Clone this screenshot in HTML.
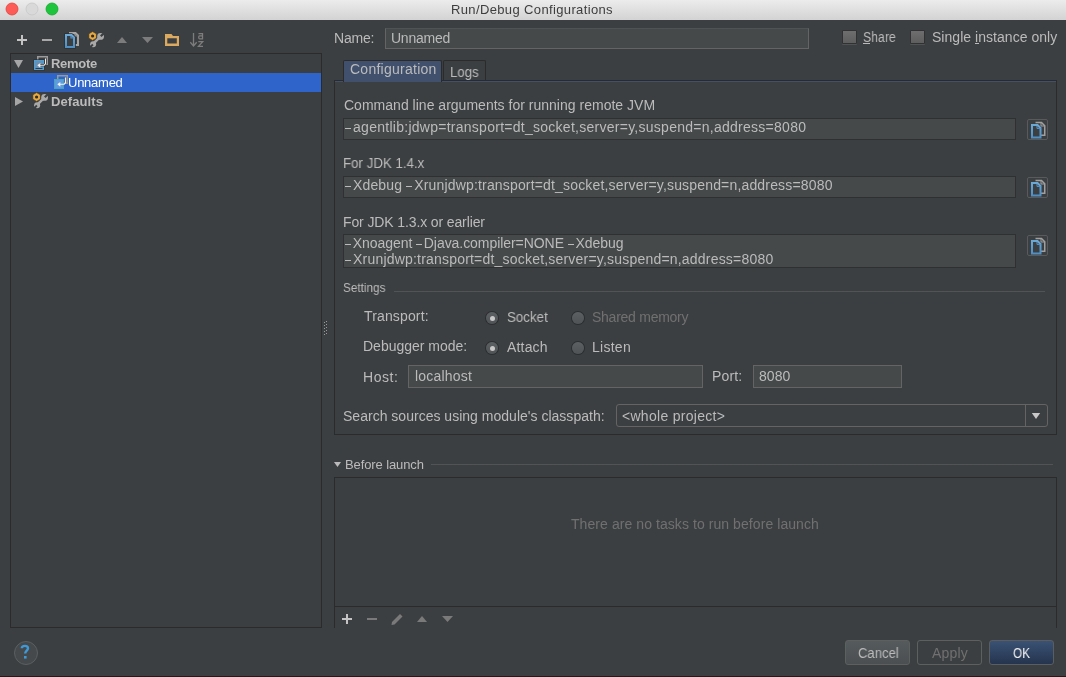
<!DOCTYPE html>
<html><head><meta charset="utf-8">
<style>
*{box-sizing:border-box;margin:0;padding:0}
html,body{width:1066px;height:677px;overflow:hidden;background:#3c3f41}
body{position:relative;font-family:"Liberation Sans",sans-serif;font-size:14px;color:#bbbbbb}
.l{position:absolute;white-space:pre;line-height:1;-webkit-font-smoothing:antialiased;will-change:transform}
.b{position:absolute}
svg{position:absolute;left:0;top:0}
.d{position:relative;color:transparent}
.d::after{content:"";position:absolute;left:0;width:6px;top:9px;height:1px;background:#bbbbbb}
</style></head><body>
<!-- title bar -->
<div class="b" style="left:0;top:0;width:1066px;height:20px;background:linear-gradient(#ececec,#d3d3d3)"></div>

<!-- tree panel -->
<div class="b" style="left:10px;top:53px;width:312px;height:575px;border:1px solid #2b2b2b"></div>
<div class="b" style="left:11px;top:73px;width:310px;height:19px;background:#2f65ca"></div>

<!-- name field -->
<div class="b" style="left:385px;top:28px;width:424px;height:21px;background:#45494a;border:1px solid #646464;border-top-color:#505355"></div>

<!-- checkboxes -->
<div class="b" style="left:842px;top:30px;width:15px;height:14px;border-radius:1px;border:1px solid #303132;background:linear-gradient(#6e6e6e,#5e5e5e);box-shadow:0 1px 0 #505254"></div>
<div class="b" style="left:910px;top:30px;width:15px;height:14px;border-radius:1px;border:1px solid #303132;background:linear-gradient(#6e6e6e,#5e5e5e);box-shadow:0 1px 0 #505254"></div>

<!-- config panel -->
<div class="b" style="left:334px;top:80px;width:723px;height:355px;border:1px solid #2b2b2b"></div>
<div class="b" style="left:335px;top:81px;width:721px;height:1px;background:#41516d"></div>
<div class="b" style="left:343px;top:60px;width:99px;height:22px;background:#41516d;border:1px solid #2b2b2b;border-bottom:none;border-radius:2px 2px 0 0"></div>
<div class="b" style="left:443px;top:60px;width:43px;height:21px;border:1px solid #2b2b2b;border-bottom:none;border-radius:2px 2px 0 0"></div>

<div class="b" style="left:343px;top:118px;width:673px;height:22px;background:#45494a;border:1px solid #2e3032"></div>
<div class="b" style="left:343px;top:176px;width:673px;height:22px;background:#45494a;border:1px solid #2e3032"></div>
<div class="b" style="left:343px;top:234px;width:673px;height:34px;background:#45494a;border:1px solid #2e3032"></div>

<div class="b" style="left:1027px;top:119px;width:21px;height:21px;border:1px solid #585a5c;border-radius:2px"></div>
<div class="b" style="left:1027px;top:177px;width:21px;height:21px;border:1px solid #585a5c;border-radius:2px"></div>
<div class="b" style="left:1027px;top:235px;width:21px;height:21px;border:1px solid #585a5c;border-radius:2px"></div>

<div class="b" style="left:394px;top:291px;width:651px;height:1px;background:#515355"></div>

<!-- radios -->
<div class="b" style="left:486px;top:312px;width:12px;height:12px;border-radius:50%;background:linear-gradient(#5d6062,#505355);box-shadow:0 0 0 1px #2b2d2f"></div>
<div class="b" style="left:486px;top:342px;width:12px;height:12px;border-radius:50%;background:linear-gradient(#5d6062,#505355);box-shadow:0 0 0 1px #2b2d2f"></div>
<div class="b" style="left:572px;top:312px;width:12px;height:12px;border-radius:50%;background:linear-gradient(#5d6062,#505355);box-shadow:0 0 0 1px #2b2d2f"></div>
<div class="b" style="left:572px;top:342px;width:12px;height:12px;border-radius:50%;background:linear-gradient(#5d6062,#505355);box-shadow:0 0 0 1px #2b2d2f"></div>
<div class="b" style="left:489.5px;top:315.5px;width:5px;height:5px;border-radius:50%;background:#c8c8c8"></div>
<div class="b" style="left:489.5px;top:345.5px;width:5px;height:5px;border-radius:50%;background:#c8c8c8"></div>

<div class="b" style="left:408px;top:365px;width:295px;height:23px;background:#45494a;border:1px solid #646464"></div>
<div class="b" style="left:753px;top:365px;width:149px;height:23px;background:#45494a;border:1px solid #646464"></div>

<div class="b" style="left:616px;top:404px;width:432px;height:23px;border:1px solid #646464;border-radius:3px"></div>
<div class="b" style="left:1025px;top:405px;width:1px;height:21px;background:#646464"></div>

<!-- before launch -->
<div class="b" style="left:431px;top:464px;width:622px;height:1px;background:#515355"></div>
<div class="b" style="left:334px;top:477px;width:723px;height:151px;border:1px solid #2b2b2b;border-bottom:none"></div>
<div class="b" style="left:335px;top:606px;width:721px;height:1px;background:#2b2b2b"></div>

<!-- buttons -->
<div class="b" style="left:845px;top:640px;width:65px;height:25px;border:1px solid #5e6060;border-radius:3px;background:linear-gradient(#555a5c,#4b4f51)"></div>
<div class="b" style="left:917px;top:640px;width:65px;height:25px;border:1px solid #5e6060;border-radius:3px"></div>
<div class="b" style="left:989px;top:640px;width:65px;height:25px;border:1px solid #5b5e60;border-radius:3px;background:linear-gradient(#3a5274,#25344e)"></div>

<div class="b" style="left:863px;top:43px;width:7px;height:1px;background:#bbb"></div>
<div class="b" style="left:975px;top:43px;width:4px;height:1px;background:#bbb"></div>
<!-- help -->
<div class="b" style="left:14px;top:641px;width:24px;height:24px;border-radius:50%;background:#45494b;border:1px solid #5c5f61"></div>

<div class="b" style="left:0;top:676px;width:1066px;height:1px;background:#1c1c1c"></div>

<svg width="1066" height="677" viewBox="0 0 1066 677">
 <defs><linearGradient id="bg1" x1="0" y1="0" x2="0" y2="1"><stop offset="0" stop-color="#6aa8d8"/><stop offset="1" stop-color="#4f8fc4"/></linearGradient>
 <linearGradient id="bg2" x1="0" y1="0" x2="0" y2="1"><stop offset="0" stop-color="#6aa8d8"/><stop offset="1" stop-color="#4f8fc4"/></linearGradient></defs>
 <!-- traffic lights -->
 <circle cx="12" cy="9" r="6" fill="#fc5b57" stroke="#e0443e" stroke-width="0.8"/>
 <circle cx="32" cy="9" r="6" fill="#d9d9d9" stroke="#c6c6c6" stroke-width="0.8"/>
 <circle cx="52" cy="9" r="6" fill="#1fc43d" stroke="#14a82d" stroke-width="0.8"/>
 <!-- toolbar -->
 <g shape-rendering="crispEdges">
 <rect x="17" y="39" width="10" height="2" fill="#c4c4c4"/>
 <rect x="21" y="35" width="2" height="10" fill="#c4c4c4"/>
 <rect x="42" y="39" width="10" height="2" fill="#a9a9a9"/>
 </g>
 <!-- copy icon toolbar -->
 <g id="cpi">
 <path d="M70,33 H75.5 L78,35.5 V45 H70 Z" fill="none" stroke="#a6a6a6" stroke-width="2"/>
 <path d="M75,33 V36 H78" fill="none" stroke="#a6a6a6" stroke-width="1.2"/>
 <path d="M66,35 H71.5 L74,37.5 V47 H66 Z" fill="none" stroke="#2f3133" stroke-width="3.6"/>
 <path d="M66,35 H71.5 L74,37.5 V47 H66 Z" fill="#3c3f41" stroke="url(#bg1)" stroke-width="2"/>
 <path d="M71,35 V38 H74" fill="none" stroke="url(#bg1)" stroke-width="1.2"/>
 </g>
 <!-- wrench toolbar -->
 <g id="wr" transform="translate(85,29)">
  <mask id="wm"><rect x="0" y="0" width="22" height="20" fill="#fff"/>
   <path d="M15.8,7.3 L19.5,3.6" stroke="#000" stroke-width="2.2"/>
   <path d="M7.9,15.5 L3.8,19.6" stroke="#000" stroke-width="1.9"/>
  </mask>
  <g mask="url(#wm)" fill="#a9a9a9">
   <circle cx="15.6" cy="7.4" r="3.4"/>
   <path d="M15.4,7.6 L8.8,14.2" stroke="#a9a9a9" stroke-width="2.6"/>
   <circle cx="8.1" cy="15.3" r="3"/>
  </g>
  <polygon points="7.6,2.6 11.4,4.8 11.4,9.2 7.6,11.4 3.8,9.2 3.8,4.8" fill="#e9a93c" stroke="#2f3133" stroke-width="0.6"/>
  <circle cx="7.6" cy="7" r="1.6" fill="#2b2d30"/>
 </g>
 <polygon points="117,43 122,37 127,43" fill="#7c7c7c"/>
 <polygon points="142,37 153,37 147.5,43" fill="#7c7c7c"/>
 <!-- folder -->
 <path d="M165,46 V34 H171.5 L173,36 H179 V46 Z M167.3,38.2 V43.6 H176.8 V38.2 Z" fill="#dba95f" fill-rule="evenodd"/>
 <!-- sort -->
 <path d="M193.5,33 V45.5 M190.3,42.3 L193.5,46 L196.7,42.3" fill="none" stroke="#7d7d7d" stroke-width="1.3"/>
 <path d="M198.5,33.7 H202.5 V38.8 H199.6 C198.4,38.8 198.4,35.8 199.6,35.8 H202.5" fill="none" stroke="#7d7d7d" stroke-width="1.3"/>
 <path d="M198.3,41.7 H202.7 L198.5,46.3 H203" fill="none" stroke="#7d7d7d" stroke-width="1.3"/>

 <!-- tree -->
 <polygon points="14,60 23,60 18.5,68" fill="#a6a6a6"/>
 <polygon points="15,97 15,106 23,101.5" fill="#a6a6a6"/>
 <!-- remote icon -->
 <g transform="translate(0,0)">
  <rect x="37.75" y="56.75" width="9.5" height="7.5" fill="none" stroke="#9a9a9a" stroke-width="1.5"/>
  <rect x="34.5" y="60.5" width="9" height="9" fill="#6990b0" stroke="#2f3133" stroke-width="2.2"/>
  <rect x="34.5" y="60.5" width="9" height="9" fill="#6990b0" stroke="#4fa0d6" stroke-width="1"/>
  <path d="M35.5,68.5 H42.5" stroke="#2f3133" stroke-width="0.9"/>
  <path d="M45.5,58.5 V63.8 L44.2,65.2 H39.5" fill="none" stroke="#2f3133" stroke-width="2.2"/>
  <path d="M45.5,58.5 V63.8 L44.2,65.2 H39.5" fill="none" stroke="#eeeeee" stroke-width="1.1"/>
  <polygon points="37.3,65.3 40.3,62.9 40.3,67.7" fill="#eeeeee"/>
 </g>
 <g transform="translate(20,19)">
  <rect x="37.75" y="56.75" width="9.5" height="7.5" fill="none" stroke="#9c9a90" stroke-width="1.5"/>
  <rect x="34.5" y="60.5" width="9" height="9" fill="#5f9be0" stroke="#4aa3b8" stroke-width="1"/>
  <path d="M45.5,58.5 V63.8 L44.2,65.2 H39.5" fill="none" stroke="#f4f4f4" stroke-width="1.1"/>
  <polygon points="37.3,65.3 40.3,62.9 40.3,67.7" fill="#f4f4f4"/>
 </g>
 <!-- defaults wrench -->
 <use href="#wr" x="-56" y="61"/>

 <!-- splitter dots -->
 <g fill="#9a9a9a">
  <rect x="324" y="322" width="1" height="1"/><rect x="326" y="321" width="1" height="1"/>
  <rect x="324" y="325" width="1" height="1"/><rect x="326" y="324" width="1" height="1"/>
  <rect x="324" y="328" width="1" height="1"/><rect x="326" y="327" width="1" height="1"/>
  <rect x="324" y="331" width="1" height="1"/><rect x="326" y="330" width="1" height="1"/>
  <rect x="324" y="334" width="1" height="1"/><rect x="326" y="333" width="1" height="1"/>
 </g>

 <!-- copy buttons -->
 <g id="cp">
  <path d="M1035.5,122.5 H1041.5 L1044.75,125.75 V135.25 H1041" fill="none" stroke="#a0a0a0" stroke-width="1.5"/>
  <path d="M1041,122.5 V126 H1044.5" fill="none" stroke="#a0a0a0" stroke-width="1"/>
  <path d="M1032,125 H1037.5 L1040.5,128 V137.5 H1032 Z" fill="none" stroke="url(#bg1)" stroke-width="2"/>
  <path d="M1037,125 V128.5 H1040.5" fill="none" stroke="url(#bg1)" stroke-width="1"/>
 </g>
 <use href="#cp" y="58"/>
 <use href="#cp" y="116"/>

 <!-- combo arrow -->
 <polygon points="1031.8,413 1040.2,413 1036,419" fill="#c8c8c8"/>
 <!-- before launch arrow -->
 <polygon points="334,462 341,462 337.5,467" fill="#bbbbbb"/>

 <!-- before launch toolbar -->
 <g shape-rendering="crispEdges">
  <rect x="342" y="618" width="10" height="2" fill="#c4c4c4"/>
  <rect x="346" y="614" width="2" height="10" fill="#c4c4c4"/>
  <rect x="367" y="618" width="10" height="2" fill="#7a7a7a"/>
 </g>
 <path d="M392,622 L400,614 L402.5,616.5 L394.5,624.5 L391.5,625 Z" fill="#7a7a7a"/>
 <polygon points="417,622 422,616 427,622" fill="#7a7a7a"/>
 <polygon points="442,616 453,616 447.5,622" fill="#7a7a7a"/>

 <!-- help ? -->
 <path d="M21.8,648.3 C21.8,645.2 28.3,645 28,648.4 C27.8,650.6 25.2,650.8 25.2,653.6" fill="none" stroke="#3e99d6" stroke-width="2.4"/>
 <rect x="24" y="656" width="2.6" height="2.6" fill="#3e99d6"/>
</svg>
<div class="l" style="left:450.90px;top:3px;font-size:13px;font-weight:normal;color:#3d3d3d;letter-spacing:0.365px;">Run/Debug Configurations</div>
<div class="l" style="left:51.40px;top:57px;font-size:13px;font-weight:bold;color:#bbbbbb;letter-spacing:-0.269px;">Remote</div>
<div class="l" style="left:68.30px;top:76px;font-size:13px;font-weight:normal;color:#ffffff;letter-spacing:-0.256px;">Unnamed</div>
<div class="l" style="left:51.40px;top:95px;font-size:13px;font-weight:bold;color:#bbbbbb;letter-spacing:0.092px;">Defaults</div>
<div class="l" style="left:333.80px;top:31px;font-size:14px;font-weight:normal;color:#bbbbbb;letter-spacing:-0.211px;">Name:</div>
<div class="l" style="left:390.80px;top:31px;font-size:14px;font-weight:normal;color:#bbbbbb;letter-spacing:-0.236px;">Unnamed</div>
<div class="l" style="left:349.80px;top:62px;font-size:14px;font-weight:normal;color:#bbbbbb;letter-spacing:0.259px;">Configuration</div>
<div class="l" style="left:449.95px;top:65px;font-size:14px;font-weight:normal;color:#bbbbbb;letter-spacing:0.000px;transform:scaleX(0.9469);transform-origin:0 0;">Logs</div>
<div class="l" style="left:863.40px;top:30px;font-size:14px;font-weight:normal;color:#bbbbbb;letter-spacing:0.000px;transform:scaleX(0.8783);transform-origin:0 0;">Share</div>
<div class="l" style="left:931.50px;top:30px;font-size:14px;font-weight:normal;color:#bbbbbb;letter-spacing:0.036px;">Single instance only</div>
<div class="l" style="left:343.60px;top:98px;font-size:14px;font-weight:normal;color:#bbbbbb;letter-spacing:0.014px;">Command line arguments for running remote JVM</div>
<div class="l" style="left:344.60px;top:120px;font-size:14px;font-weight:normal;color:#bbbbbb;letter-spacing:0.265px;"><span class="d">–</span>agentlib:jdwp=transport=dt_socket,server=y,suspend=n,address=8080</div>
<div class="l" style="left:342.55px;top:156px;font-size:14px;font-weight:normal;color:#bbbbbb;letter-spacing:0.000px;transform:scaleX(0.9494);transform-origin:0 0;">For JDK 1.4.x</div>
<div class="l" style="left:344.60px;top:178px;font-size:14px;font-weight:normal;color:#bbbbbb;letter-spacing:0.167px;"><span class="d">–</span>Xdebug <span class="d">–</span>Xrunjdwp:transport=dt_socket,server=y,suspend=n,address=8080</div>
<div class="l" style="left:342.50px;top:215px;font-size:14px;font-weight:normal;color:#bbbbbb;letter-spacing:-0.119px;">For JDK 1.3.x or earlier</div>
<div class="l" style="left:344.60px;top:236px;font-size:14px;font-weight:normal;color:#bbbbbb;letter-spacing:-0.056px;"><span class="d">–</span>Xnoagent <span class="d">–</span>Djava.compiler=NONE <span class="d">–</span>Xdebug</div>
<div class="l" style="left:344.60px;top:252px;font-size:14px;font-weight:normal;color:#bbbbbb;letter-spacing:0.201px;"><span class="d">–</span>Xrunjdwp:transport=dt_socket,server=y,suspend=n,address=8080</div>
<div class="l" style="left:343.20px;top:281px;font-size:13px;font-weight:normal;color:#bbbbbb;letter-spacing:0.000px;transform:scaleX(0.9037);transform-origin:0 0;">Settings</div>
<div class="l" style="left:364.00px;top:309px;font-size:14px;font-weight:normal;color:#bbbbbb;letter-spacing:0.145px;">Transport:</div>
<div class="l" style="left:363.00px;top:339px;font-size:14px;font-weight:normal;color:#bbbbbb;letter-spacing:-0.008px;">Debugger mode:</div>
<div class="l" style="left:363.00px;top:370px;font-size:14px;font-weight:normal;color:#bbbbbb;letter-spacing:0.528px;">Host:</div>
<div class="l" style="left:506.50px;top:310px;font-size:14px;font-weight:normal;color:#bbbbbb;letter-spacing:0.000px;transform:scaleX(0.9532);transform-origin:0 0;">Socket</div>
<div class="l" style="left:592.00px;top:310px;font-size:14px;font-weight:normal;color:#707070;letter-spacing:-0.258px;">Shared memory</div>
<div class="l" style="left:506.50px;top:340px;font-size:14px;font-weight:normal;color:#bbbbbb;letter-spacing:0.179px;">Attach</div>
<div class="l" style="left:591.70px;top:340px;font-size:14px;font-weight:normal;color:#bbbbbb;letter-spacing:0.266px;">Listen</div>
<div class="l" style="left:414.60px;top:369px;font-size:14px;font-weight:normal;color:#bbbbbb;letter-spacing:0.204px;">localhost</div>
<div class="l" style="left:712.00px;top:369px;font-size:14px;font-weight:normal;color:#bbbbbb;letter-spacing:0.131px;">Port:</div>
<div class="l" style="left:759.40px;top:369px;font-size:14px;font-weight:normal;color:#bbbbbb;letter-spacing:0.081px;">8080</div>
<div class="l" style="left:343.30px;top:409px;font-size:14px;font-weight:normal;color:#bbbbbb;letter-spacing:0.014px;">Search sources using module's classpath:</div>
<div class="l" style="left:622.00px;top:409px;font-size:14px;font-weight:normal;color:#bbbbbb;letter-spacing:0.288px;">&lt;whole project&gt;</div>
<div class="l" style="left:345.30px;top:458px;font-size:13px;font-weight:normal;color:#bbbbbb;letter-spacing:-0.108px;">Before launch</div>
<div class="l" style="left:571.40px;top:517px;font-size:14px;font-weight:normal;color:#707070;letter-spacing:0.070px;">There are no tasks to run before launch</div>
<div class="l" style="left:857.60px;top:646px;font-size:14px;font-weight:normal;color:#bbbbbb;letter-spacing:0.000px;transform:scaleX(0.9340);transform-origin:0 0;">Cancel</div>
<div class="l" style="left:932.20px;top:646px;font-size:14px;font-weight:normal;color:#707070;letter-spacing:0.195px;">Apply</div>
<div class="l" style="left:1012.80px;top:646px;font-size:14px;font-weight:normal;color:#eeeeee;letter-spacing:0.000px;transform:scaleX(0.8377);transform-origin:0 0;">OK</div>
</body></html>
